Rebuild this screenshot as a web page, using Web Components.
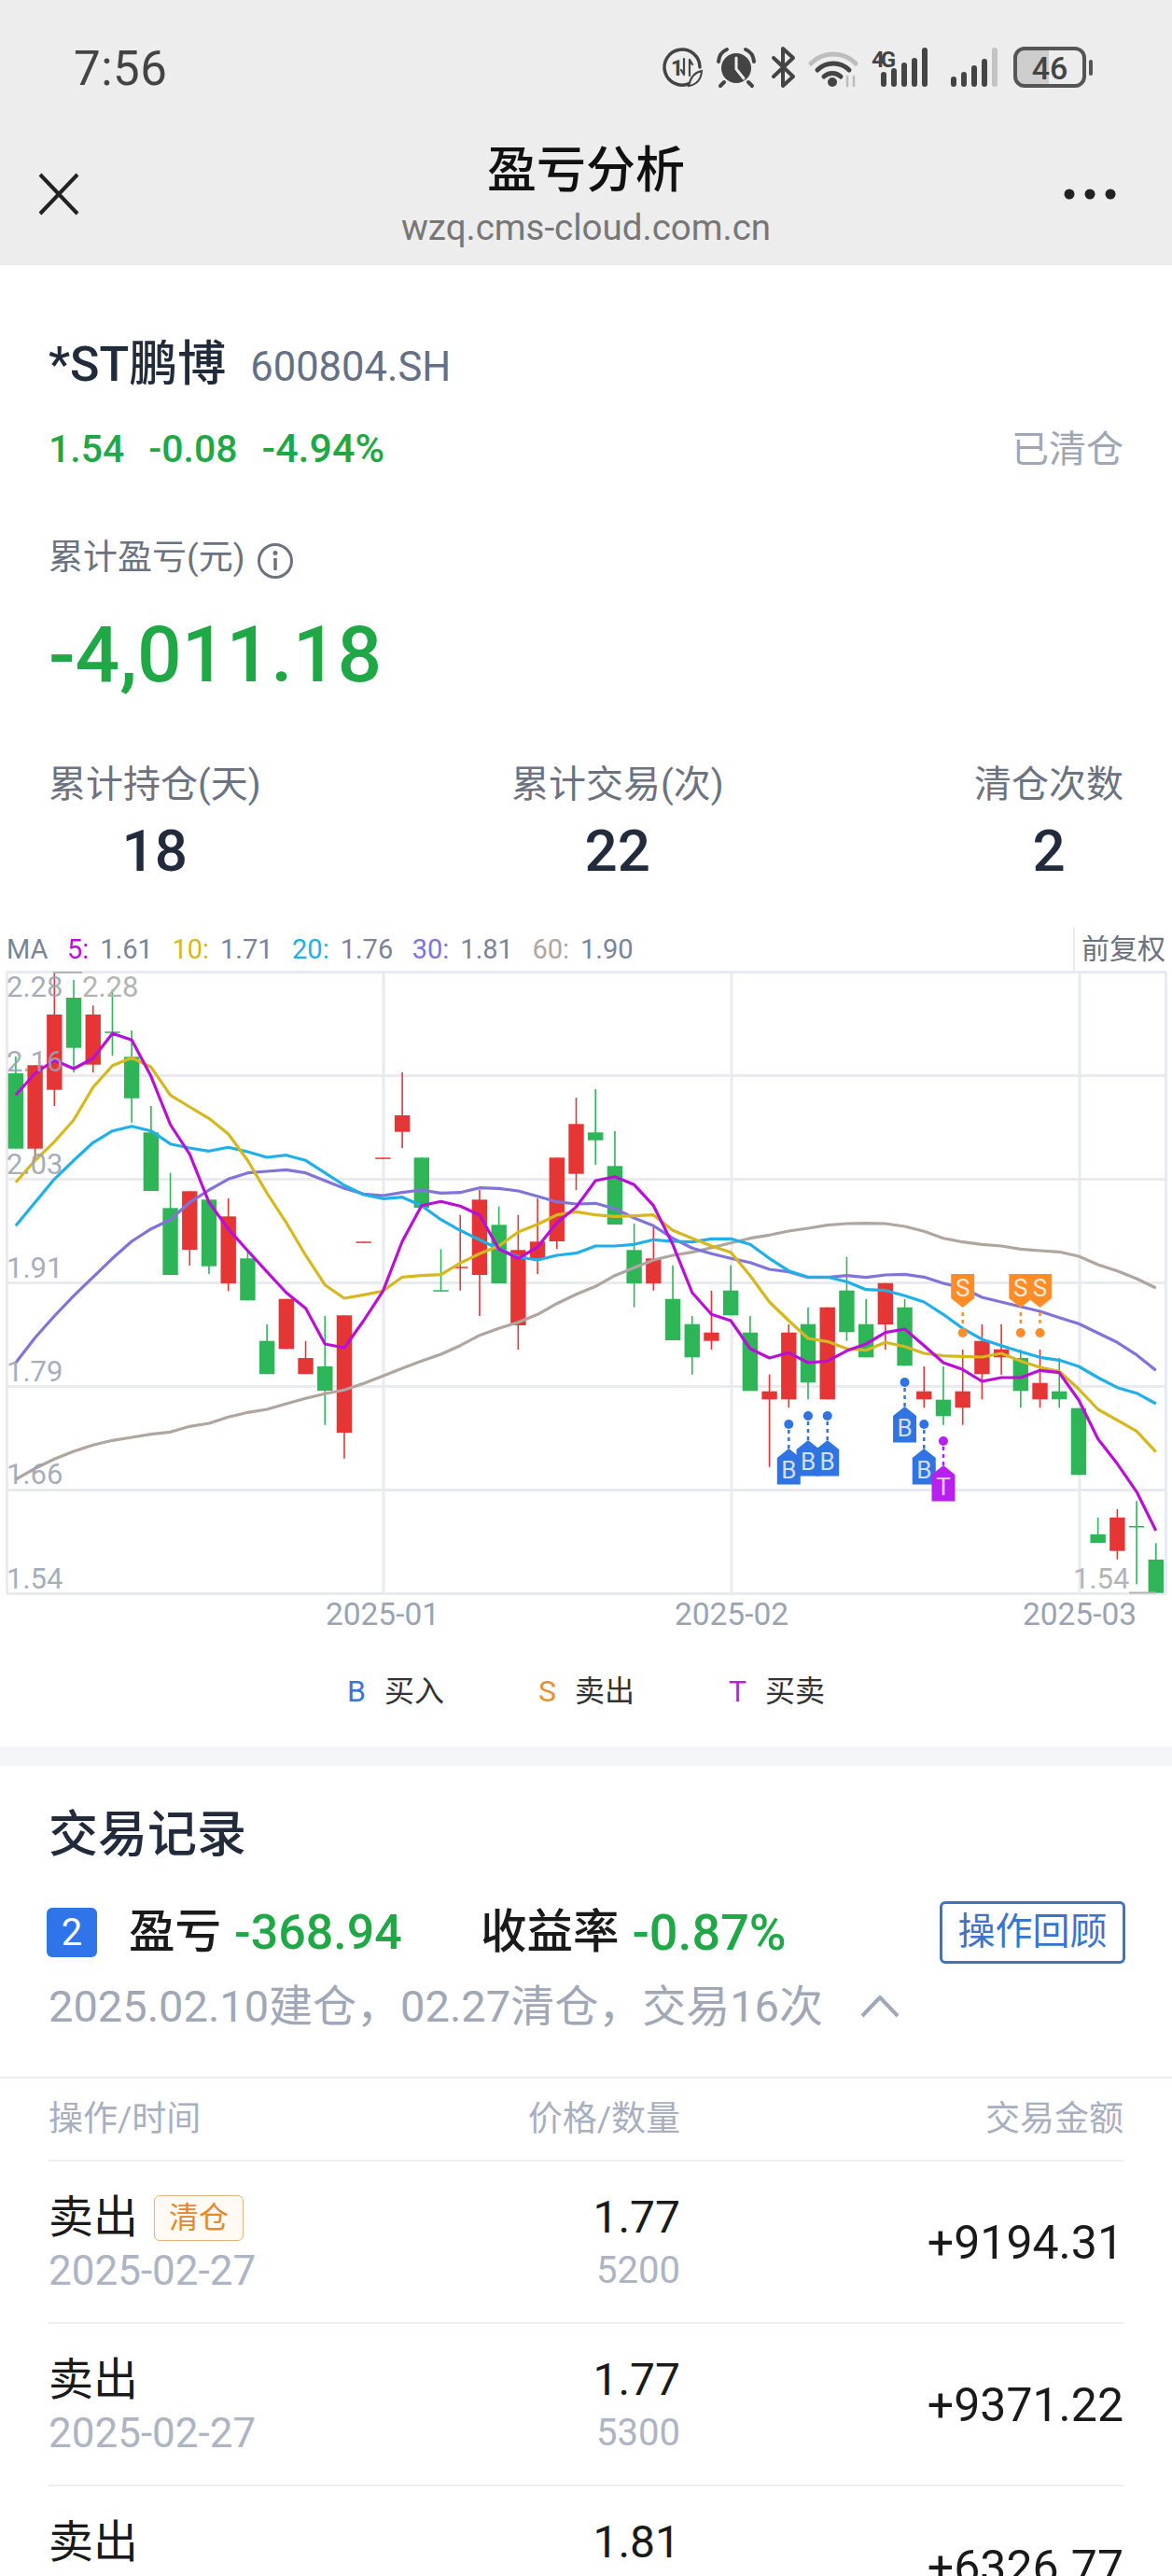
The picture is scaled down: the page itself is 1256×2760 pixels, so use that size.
<!DOCTYPE html>
<html>
<head>
<meta charset="utf-8">
<style>
  html, body { margin: 0; height: 2760px; overflow: hidden; background: #fff; }
  body { font-family: Roboto, "Noto Sans CJK SC", sans-serif; color: #222b3c; }
</style>
</head>
<body>
<status-bar time="7:56"></status-bar>
<nav-head title-text="盈亏分析" url="wzq.cms-cloud.com.cn"></nav-head>
<stock-summary>
  <stat-item label="累计持仓(天)">18</stat-item>
  <stat-item label="累计交易(次)">22</stat-item>
  <stat-item label="清仓次数">2</stat-item>
</stock-summary>
<kline-chart></kline-chart>
<trade-record>
  <trade-row op="卖出" date="2025-02-27" price="1.77" qty="5200" amount="+9194.31"><trade-tag slot="tag">清仓</trade-tag></trade-row>
  <trade-row op="卖出" date="2025-02-27" price="1.77" qty="5300" amount="+9371.22"></trade-row>
  <trade-row op="卖出" price="1.81" amount="+6326.77"></trade-row>
</trade-record>

<script>
  const FONT = 'Roboto, "Noto Sans CJK SC", sans-serif';

  class StatusBar extends HTMLElement {
    connectedCallback() {
      const root = this.attachShadow({ mode: 'open' });
      root.innerHTML = `
        <style>
          :host { display: flex; align-items: center; height: 146px; background: #ededed; padding: 0 76px 0 79px; box-sizing: border-box; font-family: ${FONT}; }
          .time { font-size: 51px; color: #444; letter-spacing: 0.5px; }
          svg { margin-left: auto; display: block; }
        </style>
        <div class="time">${this.getAttribute('time')}</div>
        <svg width="480" height="66" viewBox="700 40 480 66" fill="none" stroke-linecap="round">
          <path d="M739 89.3 A19 19 0 1 1 750 72" stroke="#444" stroke-width="3.5"/>
          <text x="719" y="81" font-family="Roboto" font-size="23" font-weight="700" fill="#444" stroke="none">1</text>
          <path d="M733 63 V80 M733 80 l-3 -5 M739 64 V81 M739 64 l3 5" stroke="#444" stroke-width="2.2"/>
          <path d="M738 92 Q751 90 752 76 Q741 78 738 92Z" fill="#ededed" stroke="#444" stroke-width="2"/>

          <circle cx="789" cy="73" r="16" fill="#444"/>
          <path d="M789 62 V74 L797 84" stroke="#ededed" stroke-width="3"/>
          <path d="M770 66 Q771 56 779 53 M808 66 Q807 56 799 53 M776 88 L772 92 M802 88 L806 92" stroke="#444" stroke-width="4"/>

          <path d="M829 62 L850 82 L839 92 V52 L850 62 L829 82" stroke="#444" stroke-width="4" stroke-linejoin="round"/>

          <path d="M869 68 A34 34 0 0 1 917 68" stroke="#bdbdbd" stroke-width="5"/>
          <path d="M876 75 A24 24 0 0 1 910 75" stroke="#444" stroke-width="5"/>
          <path d="M883 82 A13 13 0 0 1 901 82" stroke="#444" stroke-width="5"/>
          <circle cx="892" cy="88" r="5" fill="#444"/>
          <path d="M908 82 V92 M915 82 V92" stroke="#bdbdbd" stroke-width="2.5"/>

          <text x="934" y="72" font-family="Roboto" font-size="24" font-weight="700" fill="#444" stroke="none" textLength="26">4G</text>
          <path d="M947 80 V90 M958 76 V90 M969 70 V90 M980 65 V90 M991 54 V90" stroke="#444" stroke-width="6"/>

          <path d="M1022 85 V90 M1033 80 V90 M1044 73 V90 M1055 66 V90" stroke="#444" stroke-width="6"/>
          <path d="M1066 54 V90" stroke="#c4c4c4" stroke-width="6"/>

          <path d="M1097 52 H1124 V92 H1097 A9 9 0 0 1 1088 83 V61 A9 9 0 0 1 1097 52Z" fill="#cdcdcd"/>
          <rect x="1088" y="52" width="74" height="40" rx="10" stroke="#555" stroke-width="4"/>
          <text x="1125" y="85" text-anchor="middle" font-family="Roboto" font-size="34" font-weight="500" fill="#444" stroke="none">46</text>
          <path d="M1169 66 V79" stroke="#555" stroke-width="4"/>
        </svg>`;
    }
  }

  class NavHead extends HTMLElement {
    connectedCallback() {
      const root = this.attachShadow({ mode: 'open' });
      root.innerHTML = `
        <style>
          :host { display: grid; grid-template-columns: 1fr auto 1fr; height: 138px; background: #ededed; align-items: start; padding: 0 60px 0 40px; box-sizing: border-box; font-family: ${FONT}; }
          .mid { text-align: center; padding-top: 7px; margin-left: 20px; }
          .title { font-size: 53px; height: 60px; line-height: 60px; font-weight: 500; color: #111; }
          .url { font-size: 38.5px; height: 46px; line-height: 46px; margin-top: 8px; color: #777; }
          svg { display: block; margin-top: 39px; }
          svg:last-child { justify-self: end; }
        </style>
        <svg width="46" height="46" viewBox="0 0 46 46"><path d="M3 2 L43 44 M43 2 L3 44" stroke="#222" stroke-width="4" fill="none"/></svg>
        <div class="mid">
          <div class="title">${this.getAttribute('title-text')}</div>
          <div class="url">${this.getAttribute('url')}</div>
        </div>
        <svg width="56" height="46" viewBox="0 0 56 46"><g fill="#222"><circle cx="6" cy="23" r="5.5"/><circle cx="28" cy="23" r="5.5"/><circle cx="50" cy="23" r="5.5"/></g></svg>`;
    }
  }

  class StatItem extends HTMLElement {
    connectedCallback() {
      const root = this.attachShadow({ mode: 'open' });
      root.innerHTML = `
        <style>
          :host { display: block; text-align: center; }
          .l { font-size: 40px; height: 48px; line-height: 48px; color: #6b7280; }
          .v { font-size: 62px; height: 68px; line-height: 68px; margin-top: 13px; font-weight: 500; color: #222b3c; }
        </style>
        <div class="l">${this.getAttribute('label')}</div>
        <div class="v"><slot></slot></div>`;
    }
  }

  class StockSummary extends HTMLElement {
    connectedCallback() {
      const root = this.attachShadow({ mode: 'open' });
      root.innerHTML = `
        <style>
          :host { display: block; padding: 77px 52px 48px; font-family: ${FONT}; }
          .name-row { display: flex; align-items: baseline; gap: 26px; height: 60px; }
          .name { font-size: 52px; line-height: 60px; font-weight: 500; color: #222b3c; }
          .code { font-size: 43.5px; line-height: 60px; color: #667085; }
          .quote { display: flex; gap: 26px; margin-top: 35px; height: 48px; font-size: 41px; line-height: 48px; font-weight: 500; color: #1fa845; align-items: baseline; }
          .pct { font-size: 43px; }
          .state { margin-left: auto; color: #a0a6b4; font-weight: 400; font-size: 40px; }
          .sum-label { display: flex; align-items: center; gap: 12px; margin-top: 72px; height: 44px; font-size: 37px; line-height: 44px; color: #6b7280; }
          .sum-label svg { display: block; margin-top: 6px; }
          .sum { margin-top: 37px; height: 90px; font-size: 84px; line-height: 90px; font-weight: 500; color: #1fa845; }
          .stats { display: flex; justify-content: space-between; margin-top: 70px; }
        </style>
        <div class="name-row"><span class="name">*ST鹏博</span><span class="code">600804.SH</span></div>
        <div class="quote"><span>1.54</span><span>-0.08</span><span class="pct">-4.94%</span><span class="state">已清仓</span></div>
        <div class="sum-label"><span>累计盈亏(元)</span>
          <svg width="40" height="40" viewBox="0 0 40 40" fill="none"><circle cx="20" cy="20" r="17.5" stroke="#6b7280" stroke-width="3"/><circle cx="20" cy="11.5" r="2.5" fill="#6b7280"/><path d="M20 17 V30" stroke="#6b7280" stroke-width="3.5"/></svg>
        </div>
        <div class="sum">-4,011.18</div>
        <div class="stats"><slot></slot></div>`;
    }
  }

  // candle: [up, wickTop, bodyTop, bodyBottom, wickBottom], y in zoom units, page y = 980 + y / 3
  const CANDLES = [
    [0,455,510,752,752],[1,484,484,752,790],[1,183,321,563,615],[0,210,267,428,507],[1,292,321,482,507],
    [0,240,376,379,453],[0,372,457,590,668],[0,615,700,888,888],[0,830,943,1158,1158],[1,889,889,1077,1128],
    [0,916,916,1130,1155],[1,912,970,1185,1210],[0,1080,1105,1240,1240],[0,1317,1370,1477,1477],[1,1235,1235,1396,1396],
    [1,1370,1425,1477,1477],[0,1290,1452,1530,1640],[1,1288,1288,1665,1748],[1,1051,1051,1054,1054],[1,781,781,784,784],
    [1,507,645,698,750],[0,781,781,942,942],[0,1075,1207,1210,1210],[1,965,1132,1135,1208],[1,885,916,1158,1290],
    [0,938,997,1185,1185],[1,965,1078,1320,1398],[1,912,1051,1105,1155],[1,781,781,1050,1075],[1,588,673,833,885],
    [0,561,700,725,804],[0,696,808,996,996],[0,993,1078,1185,1262],[1,1000,1105,1185,1208],[0,1127,1235,1368,1368],
    [0,1290,1316,1423,1478],[1,1209,1343,1370,1398],[0,1127,1208,1288,1288],[0,1290,1343,1531,1531],[1,1478,1532,1558,1775],
    [1,1317,1343,1558,1585],[0,1262,1316,1504,1558],[1,1262,1262,1558,1558],[0,1100,1208,1342,1370],[0,1235,1316,1423,1423],
    [1,1184,1184,1317,1398],[0,1235,1262,1450,1450],[1,1452,1532,1558,1585],[0,1452,1559,1612,1640],[1,1398,1532,1585,1640],
    [1,1317,1370,1477,1558],[1,1317,1397,1423,1478],[0,1398,1425,1531,1585],[1,1398,1505,1558,1585],[0,1425,1532,1558,1585],
    [0,1586,1586,1801,1801],[0,1938,1992,2019,2019],[1,1911,1938,2045,2072],[0,1885,1965,1968,2152],[0,2020,2073,2180,2180]
  ];
  const LINES = [
    ['#b0a59f', [1815,1780,1750,1725,1705,1690,1680,1670,1663,1645,1635,1615,1600,1590,1572,1555,1540,1528,1507,1483,1458,1435,1413,1385,1352,1330,1310,1285,1250,1220,1195,1160,1135,1110,1095,1085,1070,1055,1040,1030,1017,1008,998,993,992,993,1002,1018,1040,1052,1060,1065,1075,1080,1084,1098,1125,1145,1170,1200]],
    ['#8074d8', [1440,1360,1290,1225,1165,1105,1050,1010,980,925,885,850,830,825,820,830,855,880,898,903,893,885,895,893,878,880,888,905,923,930,928,945,975,1000,1040,1072,1090,1105,1118,1140,1148,1166,1166,1160,1166,1158,1156,1165,1185,1200,1230,1245,1260,1275,1295,1315,1345,1375,1415,1465]],
    ['#1fb0e8', [1000,925,850,790,733,695,680,695,737,750,760,748,762,780,773,790,830,870,900,913,908,935,980,1015,1045,1075,1100,1110,1095,1088,1065,1065,1060,1045,1050,1052,1042,1042,1060,1105,1145,1165,1165,1180,1205,1208,1225,1245,1285,1330,1365,1385,1405,1423,1432,1452,1488,1520,1538,1572]],
    ['#d6b81e', [860,790,730,660,555,485,460,490,580,618,655,705,790,895,990,1095,1190,1233,1222,1210,1165,1160,1157,1120,1090,1065,1020,995,965,955,965,970,968,965,1015,1040,1065,1085,1160,1245,1305,1362,1372,1395,1400,1375,1388,1410,1418,1420,1422,1410,1435,1455,1468,1525,1590,1625,1660,1727]],
    ['#b90fd6', [580,510,468,495,462,382,403,520,675,770,925,1010,1080,1148,1215,1265,1380,1392,1305,1210,1050,935,922,937,965,1075,1105,1068,990,940,855,842,868,935,1060,1215,1285,1305,1395,1425,1408,1440,1435,1402,1380,1343,1332,1385,1440,1462,1500,1488,1488,1465,1472,1560,1685,1765,1855,1980]]
  ];
  const cx = i => 16.9 + 20.71 * i;
  const py = y => +(980 + y / 3).toFixed(1);

  class KlineChart extends HTMLElement {
    connectedCallback() {
      const root = this.attachShadow({ mode: 'open' });
      root.innerHTML = `
        <style>
          :host { display: block; font-family: ${FONT}; }
          .ma { display: flex; align-items: center; height: 46px; padding-left: 7px; font-size: 29px; color: #7a8496; }
          .ma span { margin-right: 20.5px; white-space: nowrap; }
          .ma i { font-style: normal; margin-right: 12px; }
          .ma .fq { margin: 0 0 0 auto; height: 46px; line-height: 46px; border-left: 2px solid #e9ebf1; padding: 0 7px; font-size: 30px; color: #6b7280; }
          svg { display: block; }
          text { font-family: ${FONT}; }
          .keys { display: flex; justify-content: center; align-items: center; gap: 101px; height: 111px; padding-bottom: 13px; box-sizing: border-box; font-size: 32px; color: #333; }
          .keys b { font-weight: 400; margin-right: 20px; }
        </style>
        <div class="ma">
          <span>MA</span>
          <span><i style="color:#b90fd6">5:</i>1.61</span>
          <span><i style="color:#d6b81e">10:</i>1.71</span>
          <span><i style="color:#1fb0e8">20:</i>1.76</span>
          <span><i style="color:#8074d8">30:</i>1.81</span>
          <span><i style="color:#b0a59f">60:</i>1.90</span>
          <span class="fq">前复权</span>
        </div>
        <svg width="1256" height="720" viewBox="0 1040 1256 720" fill="none">${this.plot()}</svg>
        <div class="keys">
          <span><b style="color:#3a76d8">B</b>买入</span>
          <span><b style="color:#e8902f">S</b>卖出</span>
          <span><b style="color:#b81ff0">T</b>买卖</span>
        </div>`;
    }

    plot() {
      let s = '<g stroke="#e9ebf1" stroke-width="3">';
      for (let k = 0; k < 7; k++) {
        const y = 1041.5 + k * 111;
        s += `<path d="M7 ${y} H1250"/>`;
      }
      [7.5, 411, 784, 1157, 1249.5].forEach(x => { s += `<path d="M${x} 1041 V1707"/>`; });
      s += '</g>';

      CANDLES.forEach((c, i) => {
        const col = c[0] ? '#e53535' : '#2db558';
        const x = cx(i);
        s += `<path d="M${x} ${py(c[1])} V${py(c[4])}" stroke="${col}" stroke-width="1.6"/>`;
        s += `<rect x="${x - 8.2}" y="${py(c[2])}" width="16.4" height="${Math.max(py(c[3]) - py(c[2]), 1.5)}" fill="${col}"/>`;
      });

      LINES.forEach(([col, pts]) => {
        const d = pts.map((y, i) => (i ? 'L' : 'M') + cx(i).toFixed(1) + ' ' + py(y)).join(' ');
        s += `<path d="${d}" stroke="${col}" stroke-width="3.2" stroke-linejoin="round"/>`;
      });

      const labels = [['2.28',1068],['2.16',1148],['2.03',1258],['1.91',1369],['1.79',1480],['1.66',1590],['1.54',1702]];
      labels.forEach(([t, y]) => { s += `<text x="7" y="${y}" font-size="31" fill="#9aa3b2" fill-opacity=".9">${t}</text>`; });
      s += '<path d="M58 1042 H88" stroke="#b4b4b4" stroke-width="2"/><text x="88" y="1068" font-size="31" fill="#b4b4b4">2.28</text>';
      s += '<path d="M1210 1706.5 H1239" stroke="#b4b4b4" stroke-width="2"/><text x="1150" y="1702" font-size="31" fill="#b4b4b4">1.54</text>';
      [['2025-01',410],['2025-02',784],['2025-03',1157]].forEach(([t, x]) => {
        s += `<text x="${x}" y="1741" font-size="33.5" text-anchor="middle" fill="#9aa3b2">${t}</text>`;
      });

      // trade markers: index, kind, tag top page y
      const B = '#2f74e0', S = '#ff8c26', T = '#b81ff0';
      [[40,'B',B,1552],[41,'B',B,1543],[42,'B',B,1543],[46,'B',B,1507],[47,'B',B,1552],[48,'T',T,1570]].forEach(([i, t, col, top]) => {
        const x = cx(i);
        s += `<circle cx="${x}" cy="${top - 26}" r="5" fill="${col}"/>`;
        s += `<path d="M${x} ${top - 20} V${top}" stroke="${col}" stroke-width="2.5" stroke-dasharray="4 4"/>`;
        s += `<path d="M${x} ${top} L${x + 12.5} ${top + 10} V${top + 38.5} H${x - 12.5} V${top + 10}Z" fill="${col}"/>`;
        s += `<text x="${x}" y="${top + 32}" font-size="26" text-anchor="middle" fill="#fff" fill-opacity=".8">${t}</text>`;
      });
      [49, 52, 53].forEach(i => {
        const x = cx(i), top = 1365;
        s += `<circle cx="${x}" cy="1428" r="5" fill="${S}"/>`;
        s += `<path d="M${x} 1406 V1422" stroke="${S}" stroke-width="2.5" stroke-dasharray="4 4"/>`;
        s += `<path d="M${x - 12.5} ${top} H${x + 12.5} V${top + 26} L${x} ${top + 36} L${x - 12.5} ${top + 26}Z" fill="${S}"/>`;
        s += `<text x="${x}" y="${top + 24}" font-size="26" text-anchor="middle" fill="#fff" fill-opacity=".85">S</text>`;
      });
      return s;
    }
  }

  class TradeRecord extends HTMLElement {
    connectedCallback() {
      const root = this.attachShadow({ mode: 'open' });
      root.innerHTML = `
        <style>
          :host { display: block; border-top: 21px solid #f4f5f9; font-family: ${FONT}; }
          .pad { padding: 44px 50px 49px 52px; border-bottom: 2px solid #eeeeee; }
          h2 { margin: 0; height: 60px; font-size: 53px; line-height: 60px; font-weight: 500; color: #222b3c; }
          .sum { display: flex; align-items: center; margin-top: 41px; height: 67px; font-size: 49.5px; line-height: 67px; font-weight: 500; color: #1a1a1a; }
          .no { width: 54px; height: 53px; margin-left: -2px; border-radius: 6px; background: #2f74e8; color: #fff; font-size: 40px; font-weight: 400; line-height: 53px; text-align: center; margin-right: 34px; }
          .num { color: #1fa845; margin-left: 14px; margin-right: 84px; font-size: 52px; }
          .pct { font-size: 54px; margin-right: 0; }
          .btn { margin-left: auto; box-sizing: border-box; width: 199px; height: 67px; border: 3px solid #3c74c4; border-radius: 6px; font-size: 40px; line-height: 60px; font-weight: 400; text-align: center; color: #3a74cc; }
          .sub { display: flex; align-items: center; margin-top: 20px; height: 52px; font-size: 47px; line-height: 52px; color: #a0a7b6; }
          .sub svg { margin-left: 40px; display: block; }
          .list { padding: 0 52px 0 52px; }
          .head { display: grid; grid-template-columns: 1fr 240px 475px; box-sizing: border-box; height: 89px; padding: 22px 0 0; border-bottom: 2px solid #eeeeee; font-size: 37px; line-height: 44px; color: #a8afbf; }
          .head :nth-child(n+2) { text-align: right; }
        </style>
        <div class="pad">
          <h2>交易记录</h2>
          <div class="sum">
            <span class="no">2</span><span>盈亏</span><span class="num">-368.94</span><span>收益率</span><span class="num pct">-0.87%</span>
            <span class="btn">操作回顾</span>
          </div>
          <div class="sub"><span>2025.02.10建仓，02.27清仓，交易16次</span>
            <svg width="42" height="24" viewBox="0 0 42 24" fill="none"><path d="M2 22 L21 2 L40 22" stroke="#a0a7b6" stroke-width="4"/></svg>
          </div>
        </div>
        <div class="list">
          <div class="head"><span>操作/时间</span><span>价格/数量</span><span>交易金额</span></div>
          <slot></slot>
        </div>`;
    }
  }

  class TradeRow extends HTMLElement {
    connectedCallback() {
      const a = n => this.getAttribute(n) || '';
      const root = this.attachShadow({ mode: 'open' });
      root.innerHTML = `
        <style>
          :host { display: grid; grid-template-columns: 1fr 240px 475px; box-sizing: border-box; height: 174px; padding-top: 32px; border-bottom: 2px solid #eeeeee; color: #1a1a1a; }
          .op { display: flex; align-items: center; gap: 17px; height: 56px; font-size: 48px; line-height: 56px; }
          .price { height: 56px; font-size: 48px; line-height: 56px; text-align: right; }
          .sub { margin-top: 5px; height: 48px; font-size: 40px; line-height: 48px; color: #adb4c4; }
          .date { font-size: 44px; }
          .qty { text-align: right; }
          .amt { font-size: 50px; line-height: 56px; text-align: right; align-self: center; margin-bottom: 31px; }
        </style>
        <div><div class="op">${a('op')}<slot name="tag"></slot></div><div class="sub date">${a('date')}</div></div>
        <div><div class="price">${a('price')}</div><div class="sub qty">${a('qty')}</div></div>
        <div class="amt">${a('amount')}</div>`;
    }
  }

  class TradeTag extends HTMLElement {
    connectedCallback() {
      const root = this.attachShadow({ mode: 'open' });
      root.innerHTML = `
        <style>
          :host { display: block; box-sizing: border-box; width: 96px; height: 49px; border: 1.5px solid #e8b27c; border-radius: 6px; background: #fffaf4; color: #e8862a; font-size: 32px; line-height: 46px; text-align: center; }
        </style><slot></slot>`;
    }
  }

  customElements.define('status-bar', StatusBar);
  customElements.define('nav-head', NavHead);
  customElements.define('stat-item', StatItem);
  customElements.define('stock-summary', StockSummary);
  customElements.define('kline-chart', KlineChart);
  customElements.define('trade-record', TradeRecord);
  customElements.define('trade-row', TradeRow);
  customElements.define('trade-tag', TradeTag);
</script>
</body>
</html>
